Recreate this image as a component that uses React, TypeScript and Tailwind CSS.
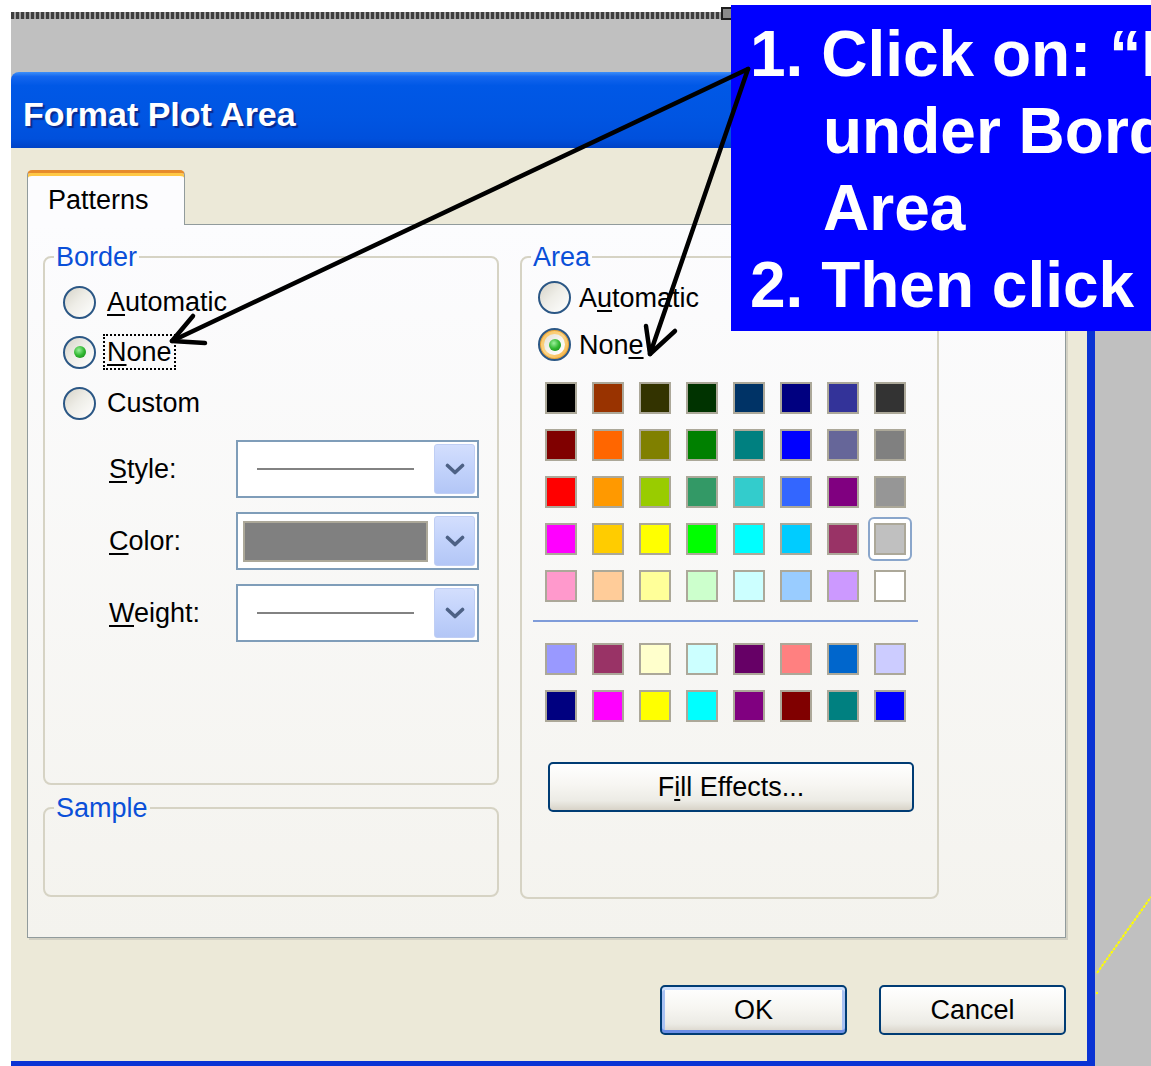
import React from "react";

const mainColors: string[][] = [
  ["#000000", "#993300", "#333300", "#003300", "#003366", "#000080", "#333399", "#333333"],
  ["#800000", "#FF6600", "#808000", "#008000", "#008080", "#0000FF", "#666699", "#808080"],
  ["#FF0000", "#FF9900", "#99CC00", "#339966", "#33CCCC", "#3366FF", "#800080", "#969696"],
  ["#FF00FF", "#FFCC00", "#FFFF00", "#00FF00", "#00FFFF", "#00CCFF", "#993366", "#C0C0C0"],
  ["#FF99CC", "#FFCC99", "#FFFF99", "#CCFFCC", "#CCFFFF", "#99CCFF", "#CC99FF", "#FFFFFF"],
];

const chartColors: string[][] = [
  ["#9999FF", "#993366", "#FFFFCC", "#CCFFFF", "#660066", "#FF8080", "#0066CC", "#CCCCFF"],
  ["#000080", "#FF00FF", "#FFFF00", "#00FFFF", "#800080", "#800000", "#008080", "#0000FF"],
];

function Radio({ checked = false, hot = false }: { checked?: boolean; hot?: boolean }) {
  return (
    <span
      className={
        hot
          ? "flex h-[33px] w-[33px] shrink-0 items-center justify-center rounded-full border-2 border-[#2b5785] bg-[linear-gradient(135deg,#f9c25a_0%,#fbd58a_50%,#f6b03c_100%)] shadow-[inset_0_0_0_1px_#e9a233]"
          : "flex h-[33px] w-[33px] shrink-0 items-center justify-center rounded-full border-2 border-[#2b5785] bg-[linear-gradient(135deg,#d6d3c8_0%,#eeede7_45%,#ffffff_100%)]"
      }
    >
      {hot ? (
        <span className="flex h-[21px] w-[21px] items-center justify-center rounded-full bg-[linear-gradient(135deg,#e2dfd5_0%,#f7f6f2_55%,#ffffff_100%)]">
          {checked && (
            <span className="h-[12px] w-[12px] rounded-full bg-[radial-gradient(circle_at_40%_35%,#9cf09c_0%,#31b831_50%,#137f13_100%)]" />
          )}
        </span>
      ) : (
        checked && (
          <span className="h-[12px] w-[12px] rounded-full bg-[radial-gradient(circle_at_40%_35%,#9cf09c_0%,#31b831_50%,#137f13_100%)]" />
        )
      )}
    </span>
  );
}

function Chevron() {
  return (
    <svg width="20" height="12" viewBox="0 0 20 12">
      <path d="M2.5 2.5 L10 9.5 L17.5 2.5" stroke="#4d6185" strokeWidth="3.6" fill="none" strokeLinecap="round" strokeLinejoin="round" />
    </svg>
  );
}

function Combo({ children }: { children: React.ReactNode }) {
  return (
    <div className="flex h-[58px] w-[243px] items-stretch border-2 border-[#7f9db9] bg-white p-[2px]">
      <div className="flex flex-1 items-center">{children}</div>
      <div className="flex w-[41px] items-center justify-center rounded-[3px] border border-[#bfcef4] bg-[linear-gradient(180deg,#d3defd_0%,#c2d2fb_50%,#b3c6f6_100%)]">
        <Chevron />
      </div>
    </div>
  );
}

function Group({ title, className, children }: { title: string; className: string; children?: React.ReactNode }) {
  return (
    <fieldset className={"min-w-0 rounded-[8px] border-2 border-[#d6d3c4] " + className}>
      <legend className="ml-[9px] px-[2px] text-[27px] leading-[30px] text-[#0a4fd8]">{title}</legend>
      {children}
    </fieldset>
  );
}

function Swatch({ color, selected = false }: { color: string; selected?: boolean }) {
  return (
    <div className="relative h-[32px] w-[32px]">
      {selected && (
        <div className="absolute -inset-[6px] rounded-[6px] border-2 border-[#8aa6cb] bg-white" />
      )}
      <div
        className="relative h-[32px] w-[32px] border-2 border-[#aca899]"
        style={{ backgroundColor: color }}
      />
    </div>
  );
}

function XpButton({ children, wide = false, isDefault = false }: { children: React.ReactNode; wide?: boolean; isDefault?: boolean }) {
  const base =
    "flex h-[50px] items-center justify-center rounded-[5px] border-2 border-[#003c74] text-[27px] text-black bg-[linear-gradient(180deg,#ffffff_0%,#f7f6f2_45%,#ecebe5_80%,#d8d3c8_100%)]";
  const width = wide ? " w-[366px]" : " w-[187px]";
  const glow = isDefault
    ? " shadow-[inset_0_3px_0_#cfe0fd,inset_0_-3px_0_#6c8ee6,inset_3px_0_0_#a9c2f3,inset_-3px_0_0_#a9c2f3]"
    : "";
  return <div className={base + width + glow}>{children}</div>;
}

function Dialog() {
  return (
    <div className="flex w-[1084px] flex-col">
      {/* title bar */}
      <div className="flex h-[76px] items-center rounded-t-[8px] bg-[linear-gradient(180deg,#3d8ff9_0%,#1466ee_6%,#0058e6_18%,#0055e2_60%,#0050dc_88%,#0042c6_100%)] pl-[12px] pt-[9px]">
        <span className="text-[34px] font-bold text-white [text-shadow:2px_2px_1px_#0a2a8e]">Format Plot Area</span>
      </div>

      {/* client area */}
      <div className="flex flex-1 flex-col border-b-[5px] border-r-[8px] border-[#0a33d4] bg-[#ece9d8] pl-[16px] pr-[21px] pt-[22px]">
        {/* tab strip */}
        <div className="h-[54px]">
          <div className="relative z-10 flex h-[55px] w-[158px] items-center rounded-t-[5px] border-x border-t-[3px] border-x-[#919b9c] border-t-[#e68b2c] bg-[#fcfcfe] pl-[20px] pt-[2px] text-[27px] text-black shadow-[inset_0_3px_0_#ffc845]">
            Patterns
          </div>
        </div>

        {/* tab page */}
        <div className="flex h-[714px] border border-[#919b9c] bg-[linear-gradient(180deg,#fcfcfe_0%,#f4f3ee_100%)] pl-[15px] pt-[17px] text-[27px] text-black shadow-[2px_2px_0_#d2d0c3]">
          {/* left column */}
          <div className="flex w-[456px] flex-col">
            <Group title="Border" className="h-[543px]">
              <div className="flex flex-col pl-[18px] pt-[5px]">
                <div className="flex h-[50px] items-center gap-[7px]">
                  <Radio />
                  <span className="border-2 border-transparent px-[2px] leading-[32px]">
                    <span className="underline decoration-2 underline-offset-[3px]">A</span>utomatic
                  </span>
                </div>
                <div className="flex h-[50px] items-center gap-[7px]">
                  <Radio checked />
                  <span className="border-2 border-dotted border-black px-[2px] leading-[32px]">
                    <span className="underline decoration-2 underline-offset-[3px]">N</span>one
                  </span>
                </div>
                <div className="flex h-[52px] items-center gap-[7px]">
                  <Radio />
                  <span className="border-2 border-transparent px-[2px] leading-[32px]">Custom</span>
                </div>
              </div>

              <div className="mt-[11px] flex flex-col gap-[14px] pl-[64px]">
                <div className="flex items-center">
                  <span className="w-[127px]">
                    <span className="underline decoration-2 underline-offset-[3px]">S</span>tyle:
                  </span>
                  <Combo>
                    <div className="ml-[17px] h-[2px] w-[157px] bg-[#828282]" />
                  </Combo>
                </div>
                <div className="flex items-center">
                  <span className="w-[127px]">
                    <span className="underline decoration-2 underline-offset-[3px]">C</span>olor:
                  </span>
                  <Combo>
                    <div className="ml-[3px] mr-[6px] h-[41px] flex-1 border-2 border-[#aca899] bg-[#808080]" />
                  </Combo>
                </div>
                <div className="flex items-center">
                  <span className="w-[127px]">
                    <span className="underline decoration-2 underline-offset-[3px]">W</span>eight:
                  </span>
                  <Combo>
                    <div className="ml-[17px] h-[2px] w-[157px] bg-[#828282]" />
                  </Combo>
                </div>
              </div>
            </Group>

            <Group title="Sample" className="mt-[8px] h-[104px]" />
          </div>

          {/* right column */}
          <div className="ml-[21px] w-[419px]">
            <Group title="Area" className="h-[657px]">
              <div className="flex flex-col pl-[16px] pt-[2px]">
                <div className="flex h-[47px] items-center gap-[6px]">
                  <Radio />
                  <span className="px-[2px] leading-[32px]">
                    A<span className="underline decoration-2 underline-offset-[3px]">u</span>tomatic
                  </span>
                </div>
                <div className="flex h-[47px] items-center gap-[6px]">
                  <Radio checked hot />
                  <span className="px-[2px] leading-[32px]">
                    Non<span className="underline decoration-2 underline-offset-[3px]">e</span>
                  </span>
                </div>
              </div>

              <div className="mt-[14px] grid w-fit grid-cols-8 gap-[15px] pl-[23px]">
                {mainColors.flat().map((c, i) => (
                  <Swatch key={"m" + i} color={c} selected={i === 31} />
                ))}
              </div>

              <div className="ml-[11px] mt-[18px] h-[2px] w-[385px] bg-[#7f9cd9]" />

              <div className="mt-[21px] grid w-fit grid-cols-8 gap-[15px] pl-[23px]">
                {chartColors.flat().map((c, i) => (
                  <Swatch key={"c" + i} color={c} />
                ))}
              </div>

              <div className="ml-[26px] mt-[40px]">
                <XpButton wide>
                  <span>
                    F<span className="underline decoration-2 underline-offset-[3px]">i</span>ll Effects...
                  </span>
                </XpButton>
              </div>
            </Group>
          </div>
        </div>

        {/* command buttons */}
        <div className="mt-[47px] flex justify-end gap-[32px]">
          <XpButton isDefault>OK</XpButton>
          <XpButton>Cancel</XpButton>
        </div>
      </div>
    </div>
  );
}

export default function App() {
  return (
    <div className="relative h-[1066px] w-[1151px] overflow-hidden bg-white pl-[11px] pt-[12px] font-['Liberation_Sans',Arial,sans-serif]">
      <div className="flex h-full flex-col bg-[#c0c0c0]">
        {/* dotted sheet gridline with a sizing handle */}
        <div className="relative h-[7px] bg-[repeating-linear-gradient(90deg,#3e3e3e_0px,#3e3e3e_3px,#a0a0a0_3px,#a0a0a0_5px)]">
          <div className="absolute left-[710px] top-[-5px] h-[13px] w-[12px] border-2 border-[#1e1e1e] bg-[#8a8a8a]" />
        </div>
        <div className="h-[53px]" />
        <div className="flex flex-1">
          <Dialog />
          <div className="flex-1">
            <svg width="56" height="994" viewBox="0 0 56 994">
              <path d="M2 901 L56 825" stroke="#ffff00" strokeWidth="2" strokeDasharray="3 1" fill="none" />
              <rect x="1" y="920" width="2" height="2" fill="#ffff00" />
            </svg>
          </div>
        </div>
      </div>

      {/* instruction callout */}
      <div className="absolute left-[731px] top-[5px] z-20 h-[326px] w-[460px] whitespace-nowrap bg-[#0000ff] pl-[19px] pt-[11px] text-[64px] font-bold leading-[77px] text-white">
        <div>1. Click on: “None”</div>
        <div className="pl-[73px]">under Border and</div>
        <div className="pl-[73px]">Area</div>
        <div>2. Then click OK</div>
      </div>

      {/* pointer arrows */}
      <svg className="pointer-events-none absolute left-0 top-0 z-30" width="1151" height="1066" viewBox="0 0 1151 1066">
        <g stroke="#000" strokeWidth="4.5" fill="none" strokeLinecap="round" strokeLinejoin="round">
          <path d="M748 69 L172 341" />
          <path d="M193 316 L172 341 L205 343" />
          <path d="M748 69 L650 354" />
          <path d="M646 326 L650 354 L675 331" />
        </g>
      </svg>
    </div>
  );
}
